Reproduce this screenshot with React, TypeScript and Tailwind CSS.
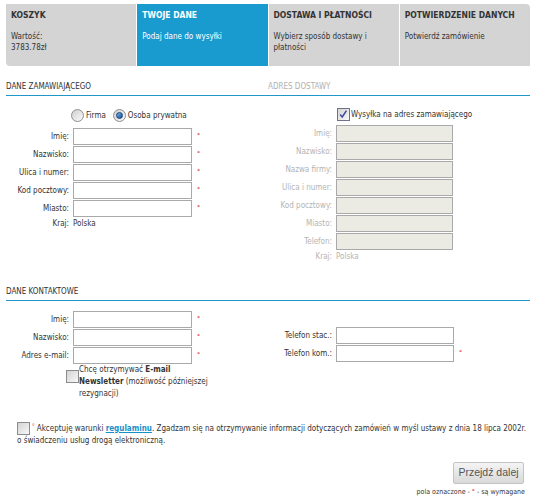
import React from "react";

const FONT = { fontFamily: '"DejaVu Sans Condensed", "DejaVu Sans", Tahoma, sans-serif' };

function Req() {
  return <span className="ml-[5px] text-[7px] leading-none text-[#e01010]">°</span>;
}

function Row({
  label,
  labelW,
  inputW,
  required,
  disabled,
}: {
  label: string;
  labelW: number;
  inputW: number;
  required?: boolean;
  disabled?: boolean;
}) {
  return (
    <div className="flex h-[17px] items-center">
      <div
        className={`shrink-0 pr-[4px] text-right ${disabled ? "text-[#b4b4b4]" : "text-[#333]"}`}
        style={{ width: labelW + 4 }}
      >
        {label}
      </div>
      <div
        className={`h-[17px] shrink-0 border border-[#a9a9a9] ${disabled ? "bg-[#ebeae3]" : "bg-white"}`}
        style={{ width: inputW }}
      />
      {required ? <Req /> : null}
    </div>
  );
}

function Checkbox({ checked }: { checked?: boolean }) {
  return (
    <span
      className={`relative inline-block h-[13px] w-[13px] shrink-0 border ${checked ? "border-[#707088]" : "border-[#8c8c8c]"} bg-gradient-to-br from-[#d4d4d4] to-[#f8f8f8]`}
    >
      {checked ? (
        <svg viewBox="0 0 13 13" className="absolute left-0 top-0 h-[11px] w-[11px]">
          <path d="M2.5 6.5 L5 9.5 L10 2" fill="none" stroke="#3b4a9e" strokeWidth="1.8" />
        </svg>
      ) : null}
    </span>
  );
}

function Radio({ checked }: { checked?: boolean }) {
  return (
    <span className="relative inline-flex h-[13px] w-[13px] shrink-0 items-center justify-center rounded-full border border-[#8e8e8e] bg-gradient-to-br from-[#cfcfcf] to-[#fbfbfb]">
      {checked ? (
        <span className="h-[7px] w-[7px] rounded-full border border-[#1d3f6e] bg-gradient-to-br from-[#6fb6f0] to-[#0f4fa0]" />
      ) : null}
    </span>
  );
}

function Heading({ children, dim, className = "" }: { children: React.ReactNode; dim?: boolean; className?: string }) {
  return (
    <div
      className={`h-[14px] border-b border-[#2196c9] leading-[10px] ${dim ? "text-[#b0b0b0]" : "text-[#333]"} ${className}`}
    >
      {children}
    </div>
  );
}

function Tab({ title, sub, active, className = "" }: { title: string; sub: React.ReactNode; active?: boolean; className?: string }) {
  return (
    <div
      className={`h-[62px] px-[5px] pt-[5px] ${active ? "bg-[#1a9bd0] text-white" : "bg-[#d4d4d4] text-[#333]"} ${className}`}
    >
      <div className="text-[8.5px] font-bold leading-[12px]">{title}</div>
      <div className="mt-[10px] leading-[11px]">{sub}</div>
    </div>
  );
}

export default function App() {
  return (
    <div className="w-[536px] bg-white px-[6px] pt-[4px] text-[8px] text-[#333]" style={FONT}>
      {/* steps */}
      <div className="grid grid-cols-4 gap-px">
        <Tab className="rounded-bl-[4px]" title="KOSZYK" sub={<>Wartość:<br />3783.78zł</>} />
        <Tab active title="TWOJE DANE" sub="Podaj dane do wysyłki" />
        <Tab title="DOSTAWA I PŁATNOŚCI" sub={<>Wybierz sposób dostawy i<br />płatności</>} />
        <Tab className="rounded-tr-[4px]" title="POTWIERDZENIE DANYCH" sub="Potwierdź zamówienie" />
      </div>

      {/* address columns */}
      <div className="mt-[16px] grid grid-cols-2">
        <div>
          <Heading>DANE ZAMAWIAJĄCEGO</Heading>
          <div className="ml-[65px] mt-[13px] flex h-[13px] items-center">
            <Radio />
            <span className="ml-[2px]">Firma</span>
            <span className="ml-[7px]" />
            <Radio checked />
            <span className="ml-[2px]">Osoba prywatna</span>
          </div>
          <div className="mt-[6px] flex flex-col gap-px">
            <Row label="Imię:" labelW={63} inputW={119} required />
            <Row label="Nazwisko:" labelW={63} inputW={119} required />
            <Row label="Ulica i numer:" labelW={63} inputW={119} required />
            <Row label="Kod pocztowy:" labelW={63} inputW={119} required />
            <Row label="Miasto:" labelW={63} inputW={119} required />
            <div className="flex h-[12px] items-center">
              <div className="w-[67px] pr-[4px] text-right">Kraj:</div>
              <div>Polska</div>
            </div>
          </div>
        </div>
        <div>
          <Heading dim>ADRES DOSTAWY</Heading>
          <div className="ml-[69px] mt-[12px] flex h-[13px] items-center">
            <Checkbox checked />
            <span className="ml-[1px] text-[#333]">Wysyłka na adres zamawiającego</span>
          </div>
          <div className="mt-[4px] flex flex-col gap-px">
            <Row label="Imię:" labelW={64} inputW={117} disabled />
            <Row label="Nazwisko:" labelW={64} inputW={117} disabled />
            <Row label="Nazwa firmy:" labelW={64} inputW={117} disabled />
            <Row label="Ulica i numer:" labelW={64} inputW={117} disabled />
            <Row label="Kod pocztowy:" labelW={64} inputW={117} disabled />
            <Row label="Miasto:" labelW={64} inputW={117} disabled />
            <Row label="Telefon:" labelW={64} inputW={117} disabled />
            <div className="flex h-[12px] items-center text-[#b4b4b4]">
              <div className="w-[68px] pr-[4px] text-right">Kraj:</div>
              <div>Polska</div>
            </div>
          </div>
        </div>
      </div>

      {/* contact */}
      <Heading className="mt-[24px]">DANE KONTAKTOWE</Heading>
      <div className="grid grid-cols-2">
        <div>
          <div className="mt-[10px] flex flex-col gap-px">
            <Row label="Imię:" labelW={63} inputW={119} required />
            <Row label="Nazwisko:" labelW={63} inputW={119} required />
            <Row label="Adres e-mail:" labelW={63} inputW={119} required />
          </div>
          <div className="ml-[60px] flex items-start">
            <span className="mt-[6px]">
              <Checkbox />
            </span>
            <div className="leading-[12px]">
              Chcę otrzymywać <b>E-mail</b>
              <br />
              <b>Newsletter</b> (możliwość późniejszej
              <br />
              rezygnacji)
            </div>
          </div>
        </div>
        <div>
          <div className="mt-[26px] flex flex-col gap-px">
            <Row label="Telefon stac.:" labelW={64} inputW={118} />
            <Row label="Telefon kom.:" labelW={64} inputW={118} required />
          </div>
        </div>
      </div>

      {/* terms */}
      <div className="ml-[11px] mt-[22px] leading-[12px]">
        <div className="flex h-[13px] items-center whitespace-nowrap">
          <Checkbox />
          <span className="mb-[5px] ml-[2px] mr-[2px] text-[6px] leading-none text-[#e01010]">°</span>
          <span>Akceptuję warunki&nbsp;</span>
          <span className="font-bold text-[#1a8fc8] underline">regulaminu</span>
          <span>. Zgadzam się na otrzymywanie informacji dotyczących zamówień w myśl ustawy z dnia 18 lipca 2002r.</span>
        </div>
        <div>o świadczeniu usług drogą elektroniczną.</div>
      </div>

      {/* button */}
      <div className="mt-[15px] flex justify-end pr-[6px]">
        <button
          className="h-[22px] w-[71px] rounded-[2px] border border-[#c4c4c4] bg-gradient-to-b from-[#f4f4f4] to-[#d9d9d9] text-[10.5px] text-[#555]"
          style={{ fontFamily: '"Liberation Sans", Arial, sans-serif' }}
        >
          Przejdź dalej
        </button>
      </div>
      <div className="mt-[3px] pb-[6px] pr-[5px] text-right text-[7px] leading-[10px]">
        pola oznaczone - <span className="text-[#e01010]">°</span> - są wymagane
      </div>
    </div>
  );
}
